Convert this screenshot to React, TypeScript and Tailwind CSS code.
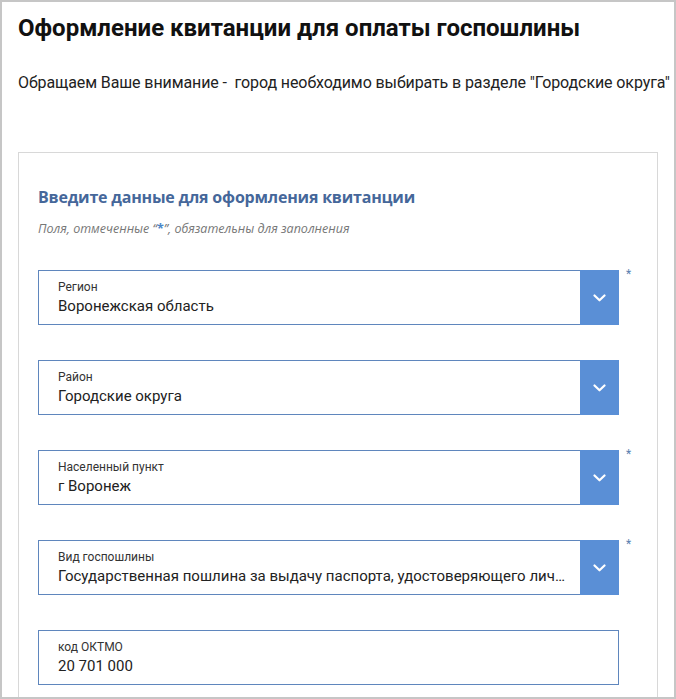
import React from "react";

const Chevron = () => (
  <svg width="13" height="8" viewBox="0 0 13 8" fill="none">
    <path d="M1.5 1.5 L6.5 6.3 L11.5 1.5" stroke="white" strokeWidth="2.2" strokeLinecap="round" strokeLinejoin="round" />
  </svg>
);

type FieldProps = { label: string; value: string; select?: boolean; required?: boolean };

const Field = ({ label, value, select = true, required = false }: FieldProps) => (
  <div className="flex items-start">
    <div className="flex w-[581px] h-[55px] border border-[#5f86bd] bg-white">
      <div className="flex-1 min-w-0 pl-[19px] pr-2 flex flex-col justify-center">
        <div className="text-[12px] leading-[16px] text-[#333]">{label}</div>
        <div className="text-[15px] leading-[20px] text-[#222] truncate mt-[1px]">{value}</div>
      </div>
      {select && (
        <div className="w-[39px] shrink-0 bg-[#5a8fd6] flex items-center justify-center -my-px -mr-px">
          <Chevron />
        </div>
      )}
    </div>
    {required && <span className="ml-[7px] -mt-[2px] text-[12px] leading-[12px] text-[#5a7fb0]">*</span>}
  </div>
);

export default function App() {
  return (
    <div
      className="w-[676px] h-[699px] border-2 border-[#c6c6c6] bg-white overflow-hidden"
      style={{ fontFamily: "Roboto, 'Noto Sans', sans-serif" }}
    >
      <h1
        className="pl-4 pt-[10px] text-[24px] leading-[32px] font-bold text-[#111] whitespace-nowrap"
        style={{ fontFamily: "Roboto, sans-serif" }}
      >
        Оформление квитанции для оплаты госпошлины
      </h1>
      <p
        className="pl-4 mt-[28px] text-[16px] leading-[22px] text-[#222] whitespace-nowrap tracking-[-0.1px]"
        style={{ fontFamily: "Roboto, sans-serif" }}
      >
        Обращаем Ваше внимание -&nbsp; город необходимо выбирать в разделе "Городские округа"
      </p>
      <div className="ml-4 mt-[58px] w-[640px] h-[600px] border border-[#d8d8d8] pl-[19px] pt-[32px]">
        <h2
          className="text-[16px] leading-[24px] font-bold text-[#45679a] whitespace-nowrap tracking-[-0.2px]"
          style={{ fontFamily: "'Open Sans', sans-serif" }}
        >
          Введите данные для оформления квитанции
        </h2>
        <p
          className="mt-[12px] text-[12.5px] leading-[16px] italic text-[#777]"
          style={{ fontFamily: "'Open Sans', sans-serif" }}
        >
          Поля, отмеченные “<span className="text-[#4a86c8] font-bold not-italic">*</span>”, обязательны для заполнения
        </p>
        <div className="mt-[33px] flex flex-col gap-[35px]">
          <Field label="Регион" value="Воронежская область" required />
          <Field label="Район" value="Городские округа" />
          <Field label="Населенный пункт" value="г Воронеж" required />
          <Field label="Вид госпошлины" value="Государственная пошлина за выдачу паспорта, удостоверяющего личность гражданина Российской Федерации" required />
          <Field label="код ОКТМО" value="20 701 000" select={false} />
        </div>
      </div>
    </div>
  );
}
